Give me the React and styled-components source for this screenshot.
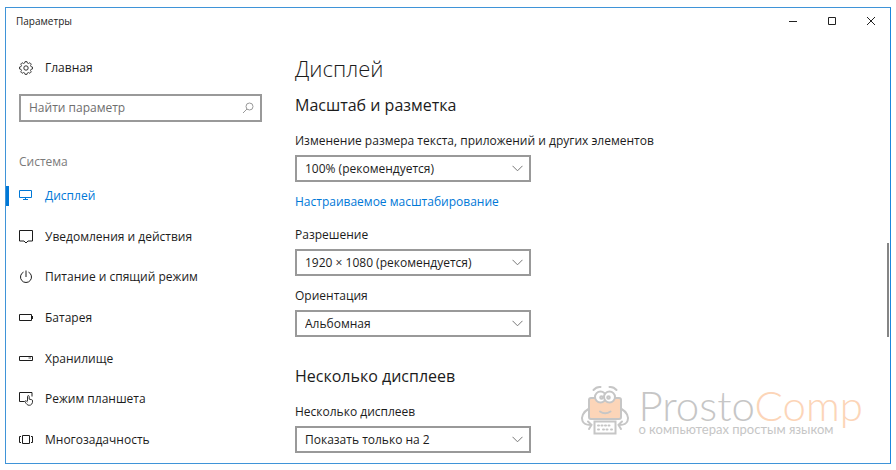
import React from 'react';
import styled, { createGlobalStyle } from 'styled-components';

const accent = '#0078d7';

const GlobalStyle = createGlobalStyle`
  *, *::before, *::after {
    box-sizing: border-box;
  }

  body {
    margin: 0;
    background: #fff;
    color: #1c1c1c;
    font-family: 'Open Sans', 'Noto Sans', sans-serif;
    font-size: 12px;
    line-height: 18px;
  }

  button, input, select {
    font: inherit;
    color: inherit;
  }
`;

const Page = styled.div`
  display: flex;
  min-height: 100vh;
  padding: 7px 5px 6px;
`;

const Window = styled.div`
  position: relative;
  flex: 1;
  display: flex;
  flex-direction: column;
  border: 1px solid #3f94d8;
  border-right-color: #1a86dc;
  background: #fff;
`;

const TitleBar = styled.header`
  display: flex;
  justify-content: space-between;
  align-items: center;
  height: 26px;
  padding-left: 10px;
  font-size: 10px;
`;

const WindowButtons = styled.div`
  display: flex;
`;

const WindowButton = styled.button`
  display: flex;
  align-items: center;
  justify-content: center;
  width: 39px;
  height: 26px;
  padding: 0;
  border: 0;
  background: none;
`;

const Columns = styled.div`
  flex: 1;
  display: flex;
`;

const Sidebar = styled.nav`
  display: flex;
  flex-direction: column;
  width: 270px;
  padding: 20px 14px 3px 0;
`;

const NavLink = styled.a`
  display: flex;
  align-items: center;
  gap: 12px;
  min-height: 28px;
  padding-left: 13px;
  color: ${props => (props.$active ? accent : 'inherit')};
  text-decoration: none;

  svg {
    flex: none;
  }
`;

const SearchBox = styled.div`
  display: flex;
  align-items: center;
  height: 28px;
  margin: 12px 0 0 13px;
  padding: 0 6px 0 8px;
  border: 2px solid #999;
`;

const SearchInput = styled.input`
  flex: 1;
  min-width: 0;
  padding: 0;
  border: 0;
  outline: 0;
  background: none;

  &::placeholder {
    color: #6e6e6e;
    opacity: 1;
  }
`;

const Category = styled.div`
  margin: 31px 0 5px 13px;
  color: #7a7a7a;
`;

const NavList = styled.ul`
  flex: 1;
  display: flex;
  flex-direction: column;
  margin: 0;
  padding: 0;
  list-style: none;
`;

const NavItem = styled.li`
  position: relative;
  flex: 1;
  display: flex;
  flex-direction: column;
  justify-content: center;
`;

const ActiveMark = styled.span`
  position: absolute;
  left: 0;
  top: 50%;
  width: 3px;
  height: 20px;
  margin-top: -10px;
  background: ${accent};
`;

const Main = styled.main`
  flex: 1;
  padding: 18px 24px 9px 19px;
`;

const PageTitle = styled.h1`
  margin: 0;
  font-size: 22px;
  font-weight: 350;
  line-height: 32px;
`;

const SectionTitle = styled.h2`
  margin: ${props => (props.$first ? 10 : 28)}px 0 16px;
  font-size: 16px;
  font-weight: 400;
  line-height: 22px;
`;

const FieldBlock = styled.div`
  & + & {
    margin-top: 11px;
  }
`;

const Label = styled.label`
  display: block;
  margin-bottom: 5px;
`;

const SelectWrap = styled.div`
  display: grid;
  align-items: center;
  width: 236px;

  & > * {
    grid-area: 1 / 1;
  }

  svg {
    justify-self: end;
    margin-right: 8px;
    pointer-events: none;
  }
`;

const Select = styled.select`
  width: 100%;
  height: 27px;
  padding: 0 28px 0 8px;
  border: 2px solid #999;
  border-radius: 0;
  background: #fff;
  appearance: none;
`;

const ScalingLink = styled.a`
  display: block;
  margin: 11px 0 15px;
  color: ${accent};
  text-decoration: none;
`;

const ScrollThumb = styled.div`
  position: absolute;
  top: 235px;
  right: 1px;
  width: 2px;
  height: 94px;
  background: #858585;
`;

const Watermark = styled.div`
  position: absolute;
  right: 27px;
  bottom: 28px;
  display: flex;
  align-items: flex-end;
  gap: 8px;
  color: #c6c6c6;
  font-family: Lato, sans-serif;
`;

const Brand = styled.div`
  font-size: 42px;
  font-weight: 300;
  line-height: 36px;

  span {
    color: #fcd5b8;
  }
`;

const Tagline = styled.div`
  font-size: 13px;
  line-height: 12px;
`;

const Icon = ({ children, size = 14 }) => (
  <svg width={size} height={size} viewBox="0 0 14 14" fill="none" stroke="currentColor" aria-hidden="true">
    {children}
  </svg>
);

const GearIcon = () => (
  <Icon>
    <path
      d="M5.700 2l.3-1.400h2L8.300 2l1.300.5 1.300-.8 1.400 1.400-.8 1.300.5 1.300 1.500.3v2l-1.500.3-.5 1.300.8 1.300-1.400 1.400-1.300-.8-1.300.5L8 13.400H6L5.700 12l-1.300-.5-1.300.8-1.400-1.400.8-1.300L2 8.300.5 8V6L2 5.700l.5-1.300-.8-1.300 1.400-1.400 1.300.8z"
      strokeWidth=".8"
    />
    <circle cx="7" cy="7" r="2.200" strokeWidth=".9" />
  </Icon>
);

const DisplayIcon = () => (
  <Icon>
    <path d="M.5 1.500h12v7H.5zM6.500 8.500v2M4 10.500h5" />
  </Icon>
);

const NotificationIcon = () => (
  <Icon>
    <path d="M.5 .5h13v10.500H9l-2 2-2-2H.5z" />
  </Icon>
);

const PowerIcon = () => (
  <Icon>
    <path d="M4.500 2.100a5.500 5.500 0 1 0 5 0M7 .5V7" />
  </Icon>
);

const BatteryIcon = () => (
  <Icon>
    <path d="M.5 3.500h12v6H.5zM13.500 5v3" />
  </Icon>
);

const StorageIcon = () => (
  <Icon>
    <path d="M.5 4.500h13v4H.5z" />
    <path d="M9.500 6h2.500" strokeWidth=".8" />
  </Icon>
);

const TabletIcon = () => (
  <Icon>
    <path d="M5.500 9.500h-5v-9h12.500v4" />
    <path
      d="M8.500 9.200V4.500c0-1.200 1.700-1.200 1.700 0v2.700l2.300.4c.8.2 1.100.6 1.100 1.300 0 2.700-1.200 4.400-3.400 4.400-1.800 0-2.600-1.200-3.500-2.500l-1-1.500c.6-.8 1.600-.5 2.800.7"
      strokeWidth=".9"
    />
  </Icon>
);

const MultitaskIcon = () => (
  <Icon>
    <path d="M3.500 2.500h7v8h-7zM2 3.500H.5v6H2M12 3.500h1.500v6H12" />
  </Icon>
);

const SearchIcon = () => (
  <svg width="12" height="12" viewBox="0 0 12 12" fill="none" stroke="#999" aria-hidden="true">
    <circle cx="7.500" cy="4.500" r="3.500" />
    <path d="M5 7L1 11" />
  </svg>
);

const Chevron = () => (
  <svg width="11" height="7" viewBox="0 0 11 7" fill="none" stroke="#777" aria-hidden="true">
    <path d="M.5.8l5 5 5-5" />
  </svg>
);

const Mascot = () => (
  <svg width="50" height="50" viewBox="0 0 50 50" fill="none" stroke="#c6c6c6" strokeWidth="2" strokeLinecap="round" aria-hidden="true">
    <rect x="9" y="13" width="32" height="21" rx="2" fill="#fcd5b8" />
    <circle cx="20.500" cy="12" r="5.500" fill="#fff" />
    <circle cx="29.500" cy="12" r="5.500" fill="#fff" />
    <circle cx="21.500" cy="12.500" r="1.300" />
    <circle cx="28.500" cy="12.500" r="1.300" />
    <path d="M13.500 5q3-3.500 7-3M29.500 2q4-.5 7 3M20 26.500q5 3.500 10.500 0" />
    <path d="M8.500 24C3 27 1 32 2.500 36c1 2.500 4 4 8 4M8 36.500l3.500 3.500L9 44" />
    <path d="M41.500 24C47 27 49 32 47.500 36c-1 2.500-4 4-8 4M42 36.500L38.500 40l2.500 4" />
    <rect x="14.500" y="36.500" width="21" height="12" />
    <path d="M18 40.500h14M18 44.500h2M23 44.500h5M31 44.500h1" strokeDasharray="1 2.500" />
  </svg>
);

const navItems = [
  { title: 'Дисплей', icon: DisplayIcon, active: true },
  { title: 'Уведомления и действия', icon: NotificationIcon },
  { title: 'Питание и спящий режим', icon: PowerIcon },
  { title: 'Батарея', icon: BatteryIcon },
  { title: 'Хранилище', icon: StorageIcon },
  { title: 'Режим планшета', icon: TabletIcon },
  { title: 'Многозадачность', icon: MultitaskIcon },
];

const Field = ({ id, label, value }) => (
  <FieldBlock>
    <Label htmlFor={id}>{label}</Label>
    <SelectWrap>
      <Select id={id} defaultValue={value}>
        <option>{value}</option>
      </Select>
      <Chevron />
    </SelectWrap>
  </FieldBlock>
);

const App = () => (
  <Page>
    <GlobalStyle />
    <Window>
      <TitleBar>
        <span>Параметры</span>
        <WindowButtons>
          <WindowButton aria-label="Свернуть">
            <svg width="10" height="10" stroke="#222"><path d="M1 5.500h8" /></svg>
          </WindowButton>
          <WindowButton aria-label="Развернуть">
            <svg width="10" height="10" stroke="#222" fill="none"><path d="M1.500 1.500h7v7h-7z" /></svg>
          </WindowButton>
          <WindowButton aria-label="Закрыть">
            <svg width="10" height="10" stroke="#222"><path d="M1 1l8 8M9 1L1 9" /></svg>
          </WindowButton>
        </WindowButtons>
      </TitleBar>
      <Columns>
        <Sidebar>
          <NavLink href="#home">
            <GearIcon />
            Главная
          </NavLink>
          <SearchBox>
            <SearchInput type="text" placeholder="Найти параметр" aria-label="Найти параметр" />
            <SearchIcon />
          </SearchBox>
          <Category>Система</Category>
          <NavList>
            {navItems.map(({ title, icon: ItemIcon, active }) => (
              <NavItem key={title}>
                {active && <ActiveMark />}
                <NavLink href="#system" $active={active}>
                  <ItemIcon />
                  {title}
                </NavLink>
              </NavItem>
            ))}
          </NavList>
        </Sidebar>
        <Main>
          <PageTitle>Дисплей</PageTitle>
          <SectionTitle $first>Масштаб и разметка</SectionTitle>
          <Field
            id="scale"
            label="Изменение размера текста, приложений и других элементов"
            value="100% (рекомендуется)"
          />
          <ScalingLink href="#scaling">Настраиваемое масштабирование</ScalingLink>
          <Field id="resolution" label="Разрешение" value="1920 × 1080 (рекомендуется)" />
          <Field id="orientation" label="Ориентация" value="Альбомная" />
          <SectionTitle>Несколько дисплеев</SectionTitle>
          <Field id="displays" label="Несколько дисплеев" value="Показать только на 2" />
        </Main>
      </Columns>
      <ScrollThumb />
      <Watermark>
        <Mascot />
        <div>
          <Brand>Prosto<span>Comp</span></Brand>
          <Tagline>о компьютерах простым языком</Tagline>
        </div>
      </Watermark>
    </Window>
  </Page>
);

export default App;
